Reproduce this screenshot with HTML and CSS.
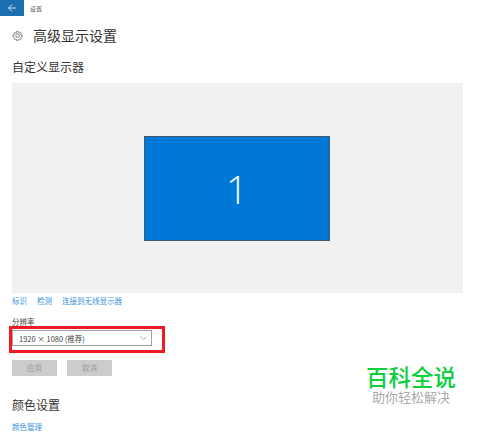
FILE: index.html
```html
<!DOCTYPE html>
<html lang="zh-CN">
<head>
    <meta charset="UTF-8">
    <title>设置</title>
    <link rel="stylesheet" href="styles.css">
</head>
<body>
    <div class="titlebar">
        <div class="back-btn">
            <svg width="10" height="8" viewBox="0 0 10 8"><path d="M5 .5 1.500 4 5 7.500M1.500 4H9" fill="none" stroke="#cfe3f2" stroke-width="1"/></svg>
        </div>
        <span class="app-name">设置</span>
    </div>

    <div class="page-head">
        <svg class="gear" width="11" height="11" viewBox="0 0 22 22">
            <circle cx="11" cy="11" r="3.500" fill="none" stroke="#555" stroke-width="1.500"/>
            <path d="M9.500 1.500h3l.6 2.800 1.900.8 2.400-1.600 2.100 2.100-1.600 2.400.8 1.900 2.800.6v3l-2.800.6-.8 1.900 1.600 2.400-2.100 2.100-2.400-1.600-1.900.8-.6 2.800h-3l-.6-2.800-1.900-.8-2.400 1.600-2.100-2.100 1.600-2.400-.8-1.900-2.800-.6v-3l2.800-.6.8-1.900-1.600-2.400 2.100-2.100 2.400 1.600 1.900-.8z" fill="none" stroke="#555" stroke-width="1.500" transform="translate(1.100 1.100) scale(.9)"/>
        </svg>
        <h1>高级显示设置</h1>
    </div>

    <h2 class="section-title">自定义显示器</h2>

    <div class="display-panel">
        <div class="monitor">1</div>
    </div>

    <div class="links">
        <a href="#">标识</a>
        <a href="#">检测</a>
        <a href="#">连接到无线显示器</a>
    </div>

    <div class="field-label">分辨率</div>
    <div class="highlight">
        <div class="select">
            <span>1920 × 1080 (推荐)</span>
            <svg width="7" height="4" viewBox="0 0 7 4"><path d="M.5.500 3.500 3.500 6.500.500" fill="none" stroke="#aaa" stroke-width="1"/></svg>
        </div>
    </div>

    <div class="buttons">
        <div class="btn">应用</div>
        <div class="btn">取消</div>
    </div>

    <h2 class="section-title color-title">颜色设置</h2>
    <a class="color-link" href="#">颜色管理</a>

    <div class="watermark">
        <div class="wm-big">百科全说</div>
        <div class="wm-small">助你轻松解决</div>
    </div>
</body>
</html>
```

FILE: styles.css
```css
body {
    margin: 0;
    height: 438px;
    overflow: hidden;
    background-color: #fff;
    color: #333;
    font-family: "Noto Sans CJK SC", "Liberation Sans", sans-serif;
}

.titlebar {
    display: flex;
    align-items: center;
    height: 16px;
}

.back-btn {
    display: flex;
    align-items: center;
    justify-content: center;
    width: 24px;
    height: 16px;
    background-color: #1a6fb0;
}

.app-name {
    margin-left: 6px;
    font-size: 6px;
    color: #555;
}

.page-head {
    display: flex;
    align-items: center;
    margin: 9px 0 0 12px;
    height: 20px;
}

.gear {
    margin-right: 10px;
}

h1 {
    margin: 0;
    font-size: 14px;
    font-weight: 400;
    color: #333;
}

.section-title {
    margin: 12px 0 0 12px;
    height: 20px;
    line-height: 20px;
    font-size: 12px;
    font-weight: 400;
    color: #333;
}

.display-panel {
    display: flex;
    align-items: center;
    justify-content: center;
    width: 451px;
    height: 210px;
    margin: 6px 0 0 12px;
    background-color: #f1f1f1;
}

.monitor {
    display: flex;
    align-items: center;
    justify-content: center;
    box-sizing: border-box;
    width: 186px;
    height: 105px;
    margin-right: 1px;
    background-color: #0078d7;
    border: 1px solid #44586a;
    color: #f2f8fd;
    font-family: "Open Sans", sans-serif;
    font-size: 39px;
    font-weight: 300;
}

.links {
    display: flex;
    gap: 10px;
    margin: 2px 0 0 12px;
    height: 12px;
    line-height: 12px;
    font-size: 7.500px;
}

a {
    color: #3a94dc;
    text-decoration: none;
}

.field-label {
    margin: 10px 0 0 12px;
    height: 9px;
    line-height: 9px;
    font-size: 7.500px;
    color: #444;
}

.highlight {
    box-sizing: border-box;
    width: 156px;
    height: 27px;
    margin: 0 0 0 9px;
    padding: 1px 0 0;
    border: 3px solid #ed1c24;
}

.select {
    display: flex;
    align-items: center;
    justify-content: space-between;
    box-sizing: border-box;
    width: 140px;
    height: 16px;
    padding: 0 4px 0 6px;
    border: 1px solid #a0a0a0;
    font-size: 7.500px;
    color: #444;
}

.buttons {
    display: flex;
    gap: 10px;
    margin: 7px 0 0 12px;
}

.btn {
    width: 45px;
    height: 16px;
    line-height: 16px;
    background-color: #cccccc;
    color: #999;
    font-size: 7.500px;
    text-align: center;
}

.color-title {
    margin-top: 19px;
}

.color-link {
    display: block;
    margin: 6px 0 0 12px;
    font-size: 7.500px;
    line-height: 12px;
}

/* watermark sits over the page */
.watermark {
    position: absolute;
    left: 366px;
    top: 363px;
    text-align: center;
}

.wm-big {
    font-size: 22.500px;
    line-height: 26px;
    color: #0ccf3f;
    font-weight: 500;
}

.wm-small {
    font-size: 13px;
    line-height: 16px;
    color: #aaa;
}
```
